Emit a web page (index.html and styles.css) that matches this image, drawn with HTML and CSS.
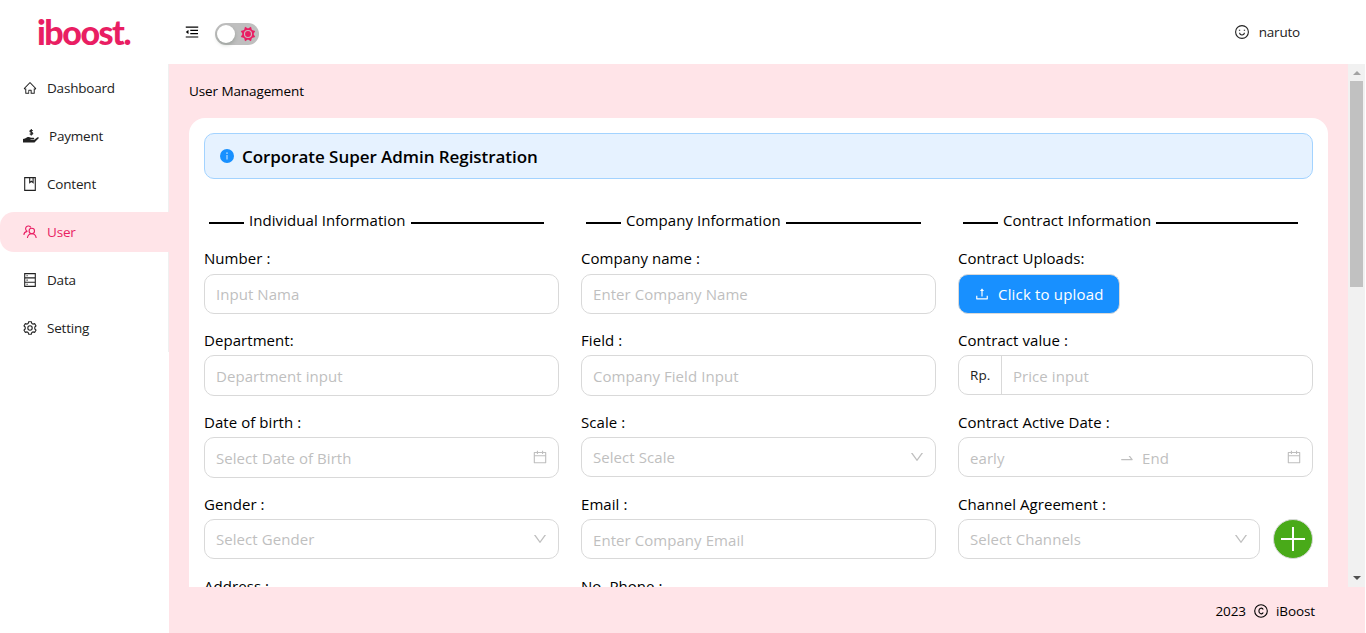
FILE: index.html
```html
<!DOCTYPE html>
<html lang="en">
<head>
<meta charset="utf-8">
<title>iBoost - User Management</title>
<link rel="stylesheet" href="styles.css">
</head>
<body>
<svg class="defs" width="0" height="0">
  <symbol id="calendar" viewBox="0 0 1024 1024"><path d="M880 184H712v-64c0-4.4-3.6-8-8-8h-56c-4.4 0-8 3.6-8 8v64H384v-64c0-4.4-3.6-8-8-8h-56c-4.4 0-8 3.6-8 8v64H144c-17.7 0-32 14.3-32 32v664c0 17.7 14.3 32 32 32h736c17.7 0 32-14.3 32-32V216c0-17.7-14.3-32-32-32zm-40 656H184V460h656v380zM184 392V256h128v48c0 4.4 3.6 8 8 8h56c4.4 0 8-3.6 8-8v-48h256v48c0 4.4 3.6 8 8 8h56c4.4 0 8-3.6 8-8v-48h128v136H184z"/></symbol>
  <symbol id="down" viewBox="0 0 1024 1024"><path d="M884 256h-75c-5.1 0-9.9 2.5-12.9 6.6L512 654.2 227.9 262.6c-3-4.1-7.8-6.6-12.9-6.6h-75c-6.5 0-10.3 7.4-6.5 12.7l352.6 486.1c12.8 17.6 39 17.6 51.7 0l352.6-486.1c3.9-5.3.1-12.7-6.4-12.7z"/></symbol>
</svg>
<div class="app">
  <aside class="sidebar">
    <div class="brand">
      <svg width="110" height="36" viewBox="0 0 110 36"><text class="logo-text" x="0" y="26" textLength="93" lengthAdjust="spacingAndGlyphs">iboost.</text></svg>
    </div>
    <nav class="menu">
      <a class="item"><svg class="icon" viewBox="0 0 1024 1024"><path d="M946.5 505L534.6 93.400a31.930 31.930 0 00-45.200 0L77.500 505c-12 12-18.800 28.300-18.800 45.300 0 35.300 28.700 64 64 64h43.400V908c0 17.700 14.300 32 32 32H448V716h112v224h265.900c17.700 0 32-14.300 32-32V614.300h43.400c17 0 33.300-6.700 45.300-18.800 24.900-25 24.900-65.500-.1-90.500zM786 868H632V676c0-17.700-14.300-32-32-32H424c-17.700 0-32 14.300-32 32v192H238V542H142l370-370 370 370H786v326z"/></svg><span>Dashboard</span></a>
      <a class="item pay"><svg class="icon hand" viewBox="0 0 16 14"><path d="M0 10l2-.4C4 7.700 6 7.500 8 8.700l2.500.1c1 .1 1 1.300 0 1.400H7.500v.5h3.700l3-2.300c1.300-.7 2.300.2 1.200 1.200L11.500 13.500H0z"/><path class="line" stroke-width="1.200" d="M9.700 1.800C9 .9 6.900 1 6.900 2.200c0 1.500 2.900.8 2.900 2.200 0 1.200-2.200 1.200-3 .2M8.300 0v6.500"/></svg><span>Payment</span></a>
      <a class="item"><svg class="icon line" viewBox="0 0 14 14"><path d="M1.700.6h10.600v12.800H1.700zM6.700.6v5l1.700-1.300 1.700 1.300v-5"/></svg><span>Content</span></a>
      <a class="item active"><svg class="icon line" viewBox="0 0 14 14"><circle cx="8.800" cy="6" r="2.700"/><path d="M4.400 13c.3-2.700 2-4.300 4.400-4.300s4.100 1.600 4.400 4.300M.8 9.900C1 8 2.200 6.700 4.100 6.400M4.500 6.400A2.800 2.800 0 1 1 7.900 2.500"/></svg><span>User</span></a>
      <a class="item"><svg class="icon line" viewBox="0 0 14 14"><path d="M1.700.6h10.600v12.800H1.700zM1.700 4.900h10.600M1.700 9.200h10.600M3.500 2.800h1.200M3.500 7.100h1.200M3.500 11.300h1.200"/></svg><span>Data</span></a>
      <a class="item"><svg class="icon line" viewBox="0 0 14 14"><path d="M5.700.7h2.600l.5 1.700 1.200.7 1.700-.5L13 4.800 11.800 6v2L13 9.200l-1.300 2.200-1.700-.5-1.200.7-.5 1.700H5.700l-.5-1.700-1.200-.7-1.700.5L1 9.200 2.200 8V6L1 4.800l1.300-2.200 1.700.5 1.200-.7z"/><circle cx="7" cy="7" r="2.200"/></svg><span>Setting</span></a>
    </nav>
  </aside>
  <div class="main">
    <header class="topbar">
      <svg class="fold" viewBox="0 0 1024 1024"><path d="M408 442h480c4.400 0 8-3.600 8-8v-56c0-4.400-3.600-8-8-8H408c-4.400 0-8 3.600-8 8v56c0 4.400 3.600 8 8 8zm-8 204c0 4.400 3.600 8 8 8h480c4.400 0 8-3.600 8-8v-56c0-4.400-3.600-8-8-8H408c-4.400 0-8 3.600-8 8v56zm504-486H120c-4.400 0-8 3.600-8 8v56c0 4.400 3.600 8 8 8h784c4.400 0 8-3.600 8-8v-56c0-4.400-3.600-8-8-8zm0 632H120c-4.400 0-8 3.600-8 8v56c0 4.400 3.600 8 8 8h784c4.400 0 8-3.600 8-8v-56c0-4.400-3.600-8-8-8zM115.400 518.900L271.700 642c5.800 4.600 14.400.5 14.400-6.900V388.900c0-7.400-8.500-11.500-14.400-6.900L115.400 505.100a8.740 8.740 0 000 13.800z"/></svg>
      <span class="switch"><i class="knob"></i><svg class="sun" viewBox="0 0 16 16"><path d="M10.100 2.900 13.500 2.500 13.100 5.900 15.800 8 13.100 10.100 13.500 13.500 10.100 13.100 8 15.800 5.900 13.100 2.500 13.500 2.900 10.100.2 8 2.900 5.900 2.500 2.500 5.900 2.900 8 .2z" transform="rotate(22.500 8 8)"/><circle class="sun-ring" cx="8" cy="8" r="3.500"/></svg></span>
      <div class="account">
        <svg class="icon line" viewBox="0 0 14 14"><circle cx="7" cy="7" r="6.400"/><path d="M4.600 7.800c.3 3 4.500 3 4.800 0M3.900 5.300h1.300M8.800 5.300h1.300"/></svg>
        <span>naruto</span>
      </div>
    </header>
    <div class="scroll-area">
      <main class="content">
        <h1 class="title">User Management</h1>
        <section class="card">
          <div class="alert"><svg class="icon" viewBox="0 0 14 14"><circle cx="7" cy="7" r="7"/><path class="info-mark" d="M6.500 6h1v4.500h-1zM6.300 3.500h1.400v1.300H6.300z"/></svg><strong>Corporate Super Admin Registration</strong></div>
          <div class="columns">
            <div class="column">
              <h2 class="divider"><span>Individual Information</span></h2>
              <div class="field"><label>Number :</label><div class="control">Input Nama</div></div>
              <div class="field tall"><label>Department:</label><div class="control">Department input</div></div>
              <div class="field early big"><label>Date of birth :</label><div class="control"><span>Select Date of Birth</span><svg class="icon cal"><use href="#calendar"/></svg></div></div>
              <div class="field early"><label>Gender :</label><div class="control select"><span>Select Gender</span><svg class="icon"><use href="#down"/></svg></div></div>
              <div class="field"><label>Address :</label></div>
            </div>
            <div class="column">
              <h2 class="divider"><span>Company Information</span></h2>
              <div class="field"><label>Company name :</label><div class="control">Enter Company Name</div></div>
              <div class="field tall"><label>Field :</label><div class="control">Company Field Input</div></div>
              <div class="field early"><label>Scale :</label><div class="control select"><span>Select Scale</span><svg class="icon"><use href="#down"/></svg></div></div>
              <div class="field early"><label>Email :</label><div class="control low">Enter Company Email</div></div>
              <div class="field"><label>No. Phone :</label></div>
            </div>
            <div class="column">
              <h2 class="divider"><span>Contract Information</span></h2>
              <div class="field"><label>Contract Uploads:</label><button class="upload"><svg class="icon" viewBox="0 0 1024 1024"><path d="M400 317.700h73.900V656c0 4.400 3.600 8 8 8h60c4.400 0 8-3.600 8-8V317.700H624c6.700 0 10.400-7.700 6.300-12.900L518.300 163a8 8 0 00-12.600 0l-112 141.700c-4.100 5.300-.4 13 6.300 13zM878 626h-60c-4.400 0-8 3.600-8 8v154H214V634c0-4.400-3.600-8-8-8h-60c-4.400 0-8 3.600-8 8v198c0 17.700 14.300 32 32 32h684c17.700 0 32-14.300 32-32V634c0-4.400-3.600-8-8-8z"/></svg><span>Click to upload</span></button></div>
              <div class="field early"><label>Contract value :</label><div class="control price"><span class="addon">Rp.</span><span class="amount">Price input</span></div></div>
              <div class="field early"><label>Contract Active Date :</label><div class="control range"><span class="start">early</span><svg class="icon" viewBox="0 0 1024 1024"><path d="M873.100 596.200l-164-208A32 32 0 00684 376h-64.800c-6.700 0-10.400 7.700-6.300 13l144.300 183H152c-4.400 0-8 3.600-8 8v60c0 4.400 3.600 8 8 8h695.900c26.800 0 41.700-30.800 25.200-51.800z"/></svg><span class="end">End</span><svg class="icon cal"><use href="#calendar"/></svg></div></div>
              <div class="field early"><label>Channel Agreement :</label><div class="with-add"><div class="control select"><span>Select Channels</span><svg class="icon"><use href="#down"/></svg></div><button class="add" aria-label="Add channel"><svg width="24" height="24" viewBox="0 0 24 24"><path d="M11 0h2v24h-2zM0 11h24v2H0z"/></svg></button></div></div>
            </div>
          </div>
        </section>
      </main>
      <div class="scrollbar"><i class="up"></i><i class="thumb"></i><i class="down"></i></div>
    </div>
    <footer class="footer"><span>2023</span><svg class="icon line" viewBox="0 0 14 14"><circle cx="7" cy="7" r="6.300"/><path d="M9.200 5.500c-.9-2.100-4.300-1.900-4.300 1.500s3.400 3.600 4.300 1.500"/></svg><span>iBoost</span></footer>
  </div>
</div>
</body>
</html>
```
FILE: styles.css
```css
* { box-sizing: border-box; }
body { margin: 0; background: #fff; color: #000; font-family: "Open Sans", "Noto Sans", sans-serif; font-size: 15px; letter-spacing: .06px; overflow: hidden; }
h1, h2 { margin: 0; font-weight: 400; }
button { border: 0; padding: 0; font: inherit; letter-spacing: inherit; }
.defs { position: absolute; }
.app { display: flex; width: 1365px; height: 633px; }
.icon { width: 14px; height: 14px; flex: none; fill: currentColor; }
.line { fill: none; stroke: currentColor; stroke-width: 1.1; }

.sidebar { width: 169px; flex: none; }
.brand { height: 64px; padding: 19px 0 0 37px; }
.brand svg { display: block; overflow: visible; }
.logo-text { font-family: Lato, sans-serif; font-weight: 900; font-size: 34px; letter-spacing: -1.5px; fill: #e91e63; }
.menu { display: flex; flex-direction: column; gap: 8px; padding-top: 4px; height: 288px; border-right: 1px solid #f0f0f0; }
.item { display: flex; align-items: center; flex: none; height: 40px; padding-left: 23px; gap: 10px; font-size: 13.5px; letter-spacing: -.2px; color: #222; margin-right: -1px; }
.item.active { background: #ffe4e8; color: #e91e63; border-radius: 14px 0 0 14px; }
.hand { width: 16px; }

.main { flex: 1; display: flex; flex-direction: column; min-width: 0; }
.topbar { height: 64px; display: flex; align-items: center; padding-left: 15px; }
.fold { width: 16px; height: 16px; margin-top: -1px; }
.switch { display: flex; align-items: center; justify-content: space-between; width: 44px; height: 22px; margin: 4px 0 0 15px; padding: 0 3px 0 2px; border-radius: 11px; background: #bfbfbf; }
.knob { width: 18px; height: 18px; border-radius: 50%; background: #fff; box-shadow: 0 2px 4px rgba(0, 35, 11, .2); }
.sun { width: 16px; height: 16px; fill: #e91e63; }
.sun-ring { fill: none; stroke: #d0b8c0; stroke-width: 1.1; }
.account { margin-left: auto; margin-right: 65px; display: flex; align-items: center; gap: 10px; font-size: 13.5px; letter-spacing: -.2px; color: #222; }

.scroll-area { height: 523px; display: flex; overflow: hidden; }
.content { flex: 1; background: #ffe4e8; padding: 0 20px; }
.title { height: 54px; line-height: 54px; font-size: 13.5px; letter-spacing: -.1px; }
.card { height: 700px; background: #fff; border-radius: 16px 16px 0 0; padding: 15px; }
.alert { height: 46px; display: flex; align-items: center; gap: 8px; padding-left: 15px; border: 1px solid #a3d3ff; border-radius: 10px; background: #e6f2ff; }
.alert .icon { color: #1890ff; }
.info-mark { fill: #d5eaff; }
.alert strong { font-weight: 600; font-size: 17px; letter-spacing: -.05px; }
.columns { display: grid; grid-template-columns: repeat(3, 355px); gap: 22px; padding-top: 29px; }
.divider { display: flex; align-items: center; gap: 5px; height: 26px; margin: 0 15px 12px 5px; font-size: 15px; }
.divider span { margin-top: -2px; }
.divider::before { content: ""; width: 35px; height: 2px; margin-top: 3px; background: #000; }
.divider::after { content: ""; flex: 1; height: 2px; margin-top: 3px; background: #000; }
.field { height: 82px; }
.field label { display: block; height: 28px; line-height: 25px; }
.control { width: 100%; height: 40px; display: flex; align-items: center; justify-content: space-between; padding: 0 10px 0 11px; border: 1px solid #d9d9d9; border-radius: 10px; color: #bfbfbf; }
.control .icon, .upload .icon { width: 16px; height: 16px; }
.select { padding-bottom: 1px; }
.low { padding-top: 2px; }
.big .control { height: 41px; }
.tall label, .early label { height: 27px; }
.tall .control { height: 41px; }
.cal { margin-top: -2px; }
.upload { display: flex; align-items: center; gap: 8px; width: 162px; height: 40px; padding-left: 15px; border: 1px solid #d9d9d9; border-radius: 10px; background: #1890ff; color: #fff; letter-spacing: .18px; }
.control.price { padding: 0; justify-content: flex-start; }
.addon { width: 43px; height: 38px; line-height: 38px; padding-left: 11px; border-right: 1px solid #d9d9d9; color: #222; font-size: 13.5px; }
.amount { padding: 2px 0 0 11px; }
.range { padding-top: 1px; }
.range .start { width: 149px; }
.range .end { flex: 1; padding-left: 7px; }
.with-add { display: flex; gap: 13px; }
.add { display: flex; align-items: center; justify-content: center; flex: none; width: 40px; height: 40px; border: 1px solid #d9d9d9; border-radius: 50%; background: #49aa19; }
.add svg { fill: #fff; }

.scrollbar { width: 17px; flex: none; background: #f1f1f1; display: flex; flex-direction: column; align-items: center; }
.up { border: 4px solid transparent; border-top-width: 0; border-bottom-color: #a3a3a3; margin: 7px 0 6px; }
.thumb { width: 13px; height: 206px; background: #c1c1c1; }
.scrollbar .down { margin-top: auto; margin-bottom: 7px; border: 4px solid transparent; border-bottom-width: 0; border-top-color: #505050; }
.footer { flex: 1; display: flex; align-items: center; justify-content: flex-end; gap: 8px; padding: 2px 50px 0 0; background: #ffe4e8; font-size: 13.5px; letter-spacing: -.1px; }
```
